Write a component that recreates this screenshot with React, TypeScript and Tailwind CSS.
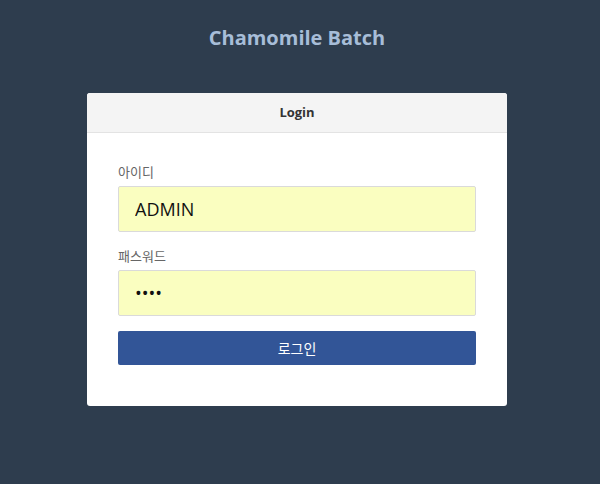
export default function App() {
  const font = { fontFamily: '"Open Sans", "Noto Sans CJK KR", sans-serif' };
  return (
    <div className="min-h-[484px] bg-[#2e3d4e]" style={font}>
      <div className="w-[594px] pt-[24px]">
        <h1 className="text-center text-[20px] leading-[28px] font-bold text-[#a7bdd8]">Chamomile Batch</h1>
        <div className="mx-auto mt-[41px] w-[420px] rounded-[3px] bg-white overflow-hidden">
          <div className="h-[40px] flex items-center justify-center bg-[#f4f4f4] border-b border-[#e3e3e3] text-[13px] font-bold text-[#333]">
            Login
          </div>
          <div className="px-[31px] pt-[30px] pb-[41px]">
            <label className="block text-[13px] leading-[18px] text-[#666] mb-[5px]">아이디</label>
            <input
              defaultValue="ADMIN"
              className="block w-full h-[46px] rounded-[2px] border border-[#dadada] bg-[#fafec0] px-[16px] text-[18px] text-[#111] outline-none"
            />
            <label className="block mt-[15px] text-[13px] leading-[18px] text-[#666] mb-[5px]">패스워드</label>
            <input
              type="password"
              defaultValue="1234"
              className="block w-full h-[46px] rounded-[2px] border border-[#dadada] bg-[#fafec0] px-[16px] text-[18px] text-[#111] outline-none"
            />
            <button className="mt-[15px] block w-full h-[34px] rounded-[2px] bg-[#325597] text-white text-[14px]">
              로그인
            </button>
          </div>
        </div>
      </div>
    </div>
  );
}
